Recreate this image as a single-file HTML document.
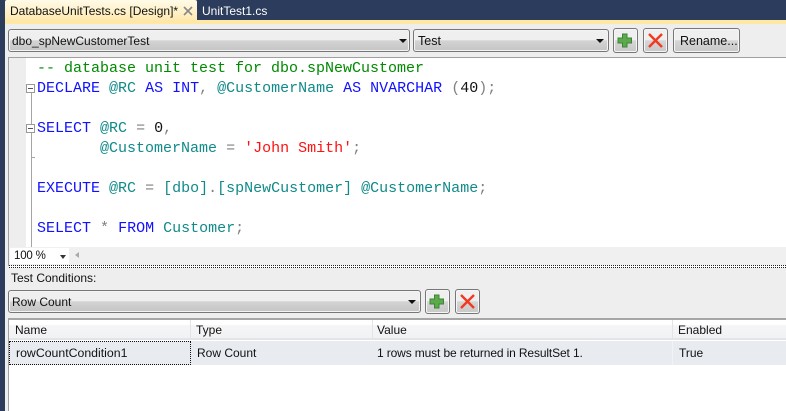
<!DOCTYPE html>
<html><head><meta charset="utf-8"><style>
*{box-sizing:border-box}
html,body{margin:0;padding:0}
body{width:786px;height:411px;position:relative;overflow:hidden;background:#eeeeee;font:12px "Liberation Sans",sans-serif;color:#111}
.a{position:absolute}
.t{position:absolute;white-space:pre;line-height:16px}
.combo{position:absolute;border:1px solid #777;border-radius:3px;box-shadow:inset 0 0 0 1px #f4f4f4;background:linear-gradient(#efefef 0,#efefef 48%,#d4d4d4 50%,#c4c4c4 100%)}
.btn{position:absolute;width:25px;height:25px;border:1px solid #777;border-radius:3px;box-shadow:inset 0 0 0 1px #f6f6f6;background:linear-gradient(#efefef 0,#efefef 48%,#d6d6d6 50%,#c8c8c8 100%)}
.arr{position:absolute;width:0;height:0;border-left:4px solid transparent;border-right:4px solid transparent;border-top:4px solid #111}
.code{position:absolute;left:37px;font:15px/20px "Liberation Mono",monospace;white-space:pre;color:#111}
.k{color:#1111ff}.v{color:#118a8a}.g{color:#808080}.c{color:#008a00}.r{color:#ff1111}
.cell{position:absolute;white-space:pre;line-height:16px}
</style></head><body>
<div class="a" style="left:0;top:0;width:786px;height:20px;background:#2b3c5c"></div>
<div class="a" style="left:0;top:0;width:5px;height:411px;background:#2b3c5c"></div>
<div class="a" style="left:5px;top:0;width:192px;height:20px;background:linear-gradient(#fffbe8,#ffe9b0);border-radius:2px 2px 0 0"></div>
<div class="a" style="left:5px;top:20px;width:781px;height:4px;background:#ffe8a6"></div>
<div class="t" style="left:10px;top:3px;font-size:12px">DatabaseUnitTests.cs [Design]*</div>
<svg class="a" style="left:183px;top:6px" width="10" height="10"><path d="M1 1L9 9M9 1L1 9" stroke="#888" stroke-width="1.6"/></svg>
<div class="t" style="left:202px;top:3px;color:#fff;font-size:12px">UnitTest1.cs</div>

<div class="combo" style="left:8px;top:29px;width:402px;height:23px"></div>
<div class="t" style="left:12px;top:33px;font-size:12px">dbo_spNewCustomerTest</div>
<div class="arr" style="left:399px;top:39px"></div>
<div class="combo" style="left:413px;top:29px;width:196px;height:23px"></div>
<div class="t" style="left:418px;top:33px;font-size:12.5px">Test</div>
<div class="arr" style="left:596px;top:39px"></div>
<div class="btn" style="left:613px;top:28px"></div>
<svg class="a" style="left:617px;top:33px" width="16" height="15"><path d="M5.5 1H10V5H14.5V10H10V14H5.5V10H1V5H5.5Z" fill="#5cab4a" stroke="#3f8338"/></svg>
<div class="btn" style="left:643px;top:28px"></div>
<svg class="a" style="left:647px;top:33px" width="17" height="15"><path d="M2 1L15 14M15 1L2 14" stroke="#f03a22" stroke-width="2.4"/></svg>
<div class="btn" style="left:673px;top:28px;width:67px"></div>
<div class="t" style="left:680px;top:33px;font-size:12.5px">Rename...</div>

<div class="a" style="left:8px;top:57px;width:778px;height:209px;background:#fff;border-top:1px solid #a0a0a0;border-left:1px solid #a0a0a0"></div>
<div class="a" style="left:9px;top:58px;width:17px;height:189px;background:#eeeeee"></div>
<div class="a" style="left:31px;top:92px;width:1px;height:155px;background:#a5a5a5"></div>
<div class="a" style="left:31px;top:157px;width:4px;height:1px;background:#a5a5a5"></div>
<div class="a" style="left:26px;top:84px;width:9px;height:9px;background:#fff;border:1px solid #999"></div>
<div class="a" style="left:28px;top:88px;width:5px;height:1px;background:#555"></div>
<div class="a" style="left:26px;top:124px;width:9px;height:9px;background:#fff;border:1px solid #999"></div>
<div class="a" style="left:28px;top:128px;width:5px;height:1px;background:#555"></div>

<div class="code c" style="top:59px">-- database unit test for dbo.spNewCustomer</div>
<div class="code" style="top:79px"><span class="k">DECLARE</span> <span class="v">@RC</span> <span class="k">AS INT</span><span class="g">,</span> <span class="v">@CustomerName</span> <span class="k">AS NVARCHAR</span> <span class="g">(</span>40<span class="g">);</span></div>
<div class="code" style="top:119px"><span class="k">SELECT</span> <span class="v">@RC</span> <span class="g">=</span> 0<span class="g">,</span></div>
<div class="code" style="top:139px">       <span class="v">@CustomerName</span> <span class="g">=</span> <span class="r">'John Smith'</span><span class="g">;</span></div>
<div class="code" style="top:179px"><span class="k">EXECUTE</span> <span class="v">@RC</span> <span class="g">=</span> <span class="v">[dbo]</span><span class="g">.</span><span class="v">[spNewCustomer]</span> <span class="v">@CustomerName</span><span class="g">;</span></div>
<div class="code" style="top:219px"><span class="k">SELECT</span> <span class="g">*</span> <span class="k">FROM</span> <span class="v">Customer</span><span class="g">;</span></div>

<div class="a" style="left:9px;top:247px;width:777px;height:18px;background:#f0f0f0"></div>
<div class="a" style="left:10px;top:248px;width:59px;height:16px;background:#fff"></div>
<div class="t" style="left:14px;top:248px;font-size:11.5px;letter-spacing:-.2px">100 %</div>
<div class="arr" style="left:60px;top:255px;border-left-width:3px;border-right-width:3px;border-top-color:#333"></div>
<div class="a" style="left:75px;top:252px;width:0;height:0;border-top:3px solid transparent;border-bottom:3px solid transparent;border-right:4px solid #aaa"></div>
<div class="a" style="left:9px;top:265px;width:777px;height:3px;border-top:1px dotted #222;border-bottom:1px dotted #222;background:#fff"></div>

<div class="t" style="left:11px;top:270px;font-size:12px">Test Conditions:</div>
<div class="combo" style="left:8px;top:290px;width:413px;height:23px"></div>
<div class="t" style="left:12px;top:294px;font-size:12px">Row Count</div>
<div class="arr" style="left:408px;top:300px"></div>
<div class="btn" style="left:425px;top:289px"></div>
<svg class="a" style="left:429px;top:294px" width="16" height="15"><path d="M5.5 1H10V5H14.5V10H10V14H5.5V10H1V5H5.5Z" fill="#5cab4a" stroke="#3f8338"/></svg>
<div class="btn" style="left:455px;top:289px"></div>
<svg class="a" style="left:459px;top:294px" width="17" height="15"><path d="M2 1L15 14M15 1L2 14" stroke="#f03a22" stroke-width="2.4"/></svg>

<div class="a" style="left:8px;top:318px;width:778px;height:93px;background:#fff;border-top:2px solid #a6a6a6;border-left:1px solid #a0a0a0"></div>
<div class="a" style="left:9px;top:320px;width:777px;height:20px;background:linear-gradient(#ffffff 0,#ffffff 25%,#f4f5f7 30%,#f1f2f4 100%);border-bottom:2px solid #e2e4e7"></div>
<div class="a" style="left:190px;top:320px;width:1px;height:20px;background:#e2e4e7"></div>
<div class="a" style="left:372px;top:320px;width:1px;height:20px;background:#e2e4e7"></div>
<div class="a" style="left:672px;top:320px;width:1px;height:20px;background:#e2e4e7"></div>
<div class="cell" style="left:15px;top:322px">Name</div>
<div class="cell" style="left:196px;top:322px">Type</div>
<div class="cell" style="left:377px;top:322px">Value</div>
<div class="cell" style="left:678px;top:322px">Enabled</div>
<div class="a" style="left:9px;top:341px;width:777px;height:24px;background:#e8ecf0"></div>
<div class="a" style="left:672px;top:341px;width:1px;height:24px;background:#f1f3f5"></div>
<div class="a" style="left:9px;top:341px;width:182px;height:24px;border:1px dotted #111"></div>
<div class="cell" style="left:16px;top:345px;font-size:12.3px">rowCountCondition1</div>
<div class="cell" style="left:197px;top:345px;font-size:12px">Row Count</div>
<div class="cell" style="left:377px;top:345px;letter-spacing:-.13px">1 rows must be returned in ResultSet 1.</div>
<div class="cell" style="left:679px;top:345px">True</div>
</body></html>
